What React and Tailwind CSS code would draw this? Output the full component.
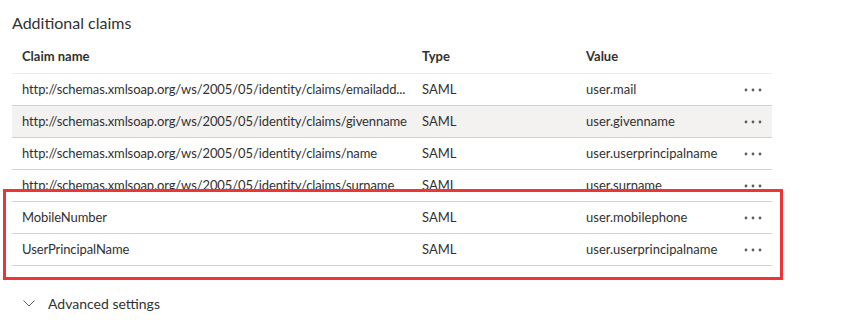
const rows = [
  { name: 'http://schemas.xmlsoap.org/ws/2005/05/identity/claims/emailadd...', type: 'SAML', value: 'user.mail' },
  { name: 'http://schemas.xmlsoap.org/ws/2005/05/identity/claims/givenname', type: 'SAML', value: 'user.givenname', hover: true },
  { name: 'http://schemas.xmlsoap.org/ws/2005/05/identity/claims/name', type: 'SAML', value: 'user.userprincipalname' },
  { name: 'http://schemas.xmlsoap.org/ws/2005/05/identity/claims/surname', type: 'SAML', value: 'user.surname' },
  { name: 'MobileNumber', type: 'SAML', value: 'user.mobilephone' },
  { name: 'UserPrincipalName', type: 'SAML', value: 'user.userprincipalname' },
]

function Dots(){
  return (
    <svg width="20" height="4" viewBox="0 0 20 4" className="text-[#605e5c]">
      <circle cx="2" cy="2" r="1.4" fill="currentColor" />
      <circle cx="9" cy="2" r="1.4" fill="currentColor" />
      <circle cx="16" cy="2" r="1.4" fill="currentColor" />
    </svg>
  )
}

export default function App(){
  return (
    <div className="relative w-[846px] h-[329px] bg-white text-[#323130]" style={{ fontFamily: 'Lato, "Segoe UI", sans-serif' }}>
      <div className="px-[12px]">
        <div className="h-[40px] pt-[11px] text-[16px] leading-[24px]">Additional claims</div>

        <div className="w-[760px] text-[13px]">
          <div className="grid grid-cols-[400px_164px_160px_36px] h-[34px] items-center border-b border-[#edebe9] font-bold">
            <div className="pl-[10px]">Claim name</div>
            <div className="pl-[10px]">Type</div>
            <div className="pl-[10px]">Value</div>
            <div></div>
          </div>
          {rows.map((r,i)=>(
            <div key={i} className={`grid grid-cols-[400px_164px_160px_36px] h-[32px] items-center border-b border-[#d1d1d1] ${r.hover ? 'bg-[#f3f2f1]' : ''}`}>
              <div className="pl-[10px] whitespace-nowrap tracking-[-0.1px]">{r.name}</div>
              <div className="pl-[10px]">{r.type}</div>
              <div className="pl-[10px] whitespace-nowrap">{r.value}</div>
              <div className="flex justify-center"><Dots /></div>
            </div>
          ))}
        </div>

        <div className="mt-[21px] h-[32px] flex items-center gap-[13px] pl-[11px] text-[14px]">
          <svg width="12" height="7" viewBox="0 0 12 7" fill="none" stroke="#605e5c" strokeWidth="1">
            <path d="M0.5 0.5 L6 6 L11.5 0.5" />
          </svg>
          <span>Advanced settings</span>
        </div>
      </div>

      {/* annotation box */}
      <div className="absolute left-[3px] top-[189px] w-[780px] h-[91px] border-[3px] border-[#ee3434]">
        <div className="h-[9px] bg-white"></div>
      </div>
    </div>
  )
}
